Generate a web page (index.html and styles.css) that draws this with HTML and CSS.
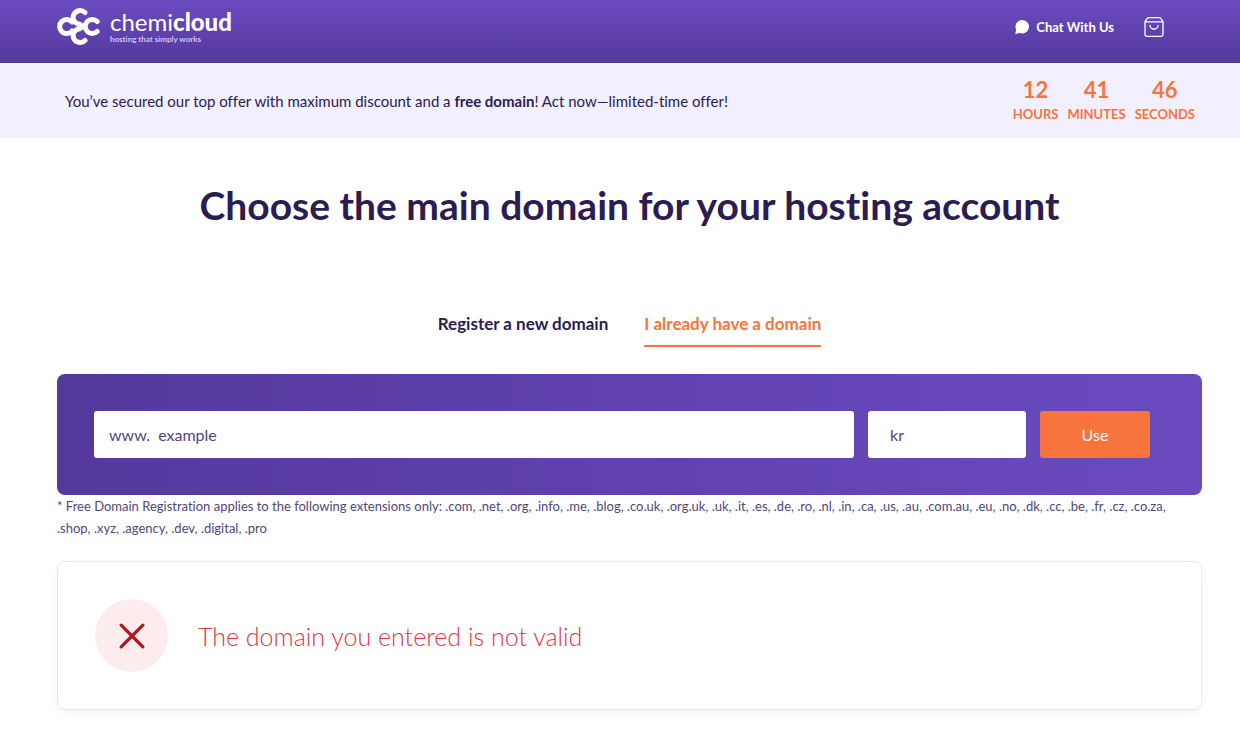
FILE: index.html
```html
<!DOCTYPE html>
<html lang="en">
<head>
<meta charset="utf-8">
<meta name="viewport" content="width=device-width, initial-scale=1">
<title>ChemiCloud – Choose your domain</title>
<link rel="stylesheet" href="styles.css">
</head>
<body>
<header class="topbar">
  <a class="logo" href="#" aria-label="chemicloud">
    <svg class="logo-mark" viewBox="0 0 43 37" aria-hidden="true">
      <g fill="none" stroke="#fff" stroke-width="5" stroke-linecap="round">
        <path d="M15 14A7 7 0 1 0 15 23"/>
        <path d="M28 4.500A7 6.800 0 1 0 23 16.200"/>
        <path d="M28 32.500A7 6.800 0 1 1 23 20.800"/>
        <path d="M40.200 13.500A7 7 0 1 0 40.200 23.500"/>
        <path d="M23 17.500 28 18.500 23 19.500"/>
      </g>
    </svg>
    <span class="logo-text">
      <span class="logo-name">chemi<b>cloud</b></span>
      <span class="logo-tag">hosting that simply works</span>
    </span>
  </a>
  <nav class="top-links">
    <a class="chat" href="#">
      <svg class="chat-icon" viewBox="0 0 14 14" aria-hidden="true"><path fill="#fff" d="M7.300 0a6.700 6.700 0 1 1-3 12.700Q2.500 14 .4 13.900 0 13.700.3 13.200 1.300 11.500.9 9A6.700 6.700 0 0 1 7.300 0Z"/></svg>
      Chat With Us
    </a>
    <a class="cart" href="#" aria-label="Cart">
      <svg class="cart-icon" viewBox="0 0 20 20" fill="none" stroke="#fff" stroke-width="1.300" stroke-linecap="round" stroke-linejoin="round" aria-hidden="true"><path d="M1 4.500 3.500 1.200Q4 .7 5 .7H15Q16 .7 16.500 1.200L19 4.500V17.500a1.800 1.800 0 0 1-1.800 1.800H2.800A1.800 1.800 0 0 1 1 17.500ZM1 4.800H19M6 8.500a4 3.500 0 0 0 8 0"/></svg>
    </a>
  </nav>
</header>
<section class="offer">
  <p class="offer-text">You’ve secured our top offer with maximum discount and a <b>free domain</b>! Act now—limited-time offer!</p>
  <div class="timer">
    <div class="unit"><span class="num">12</span><span class="label">HOURS</span></div>
    <div class="unit"><span class="num">41</span><span class="label">MINUTES</span></div>
    <div class="unit"><span class="num">46</span><span class="label">SECONDS</span></div>
  </div>
</section>
<main class="main">
  <h1 class="title">Choose the main domain for your hosting account</h1>
  <div class="tabs" role="tablist">
    <button class="tab" type="button" role="tab" aria-selected="false">Register a new domain</button>
    <button class="tab active" type="button" role="tab" aria-selected="true">I already have a domain</button>
  </div>
  <form class="search">
    <div class="field domain">
      <label for="domain">www.</label>
      <input id="domain" type="text" value="example">
    </div>
    <input class="field tld" type="text" value="kr" aria-label="Extension">
    <button class="use" type="button">Use</button>
  </form>
  <p class="note">* Free Domain Registration applies to the following extensions only: .com, .net, .org, .info, .me, .blog, .co.uk, .org.uk, .uk, .it, .es, .de, .ro, .nl, .in, .ca, .us, .au, .com.au, .eu, .no, .dk, .cc, .be, .fr, .cz, .co.za, .shop, .xyz, .agency, .dev, .digital, .pro</p>
  <div class="result" role="alert">
    <span class="badge"><svg class="cross" viewBox="0 0 24 24" aria-hidden="true"><path d="M2 2 22 22M22 2 2 22" stroke="#b3161c" stroke-width="3" stroke-linecap="round"/></svg></span>
    <p class="message">The domain you entered is not valid</p>
  </div>
</main>
</body>
</html>
```
FILE: styles.css
```css
* { box-sizing: border-box; }

body {
  margin: 0;
  background: #fff;
  color: #2b1d52;
  font-family: Lato, "Open Sans", sans-serif;
  font-variant-ligatures: none;
}

p, h1 { margin: 0; }
button, input { font: inherit; border: 0; padding: 0; }

.topbar {
  display: flex;
  justify-content: space-between;
  align-items: center;
  height: 63px;
  padding: 0 76px 10px 57px;
  background: linear-gradient(#6a4bc0, #54399c);
}

.logo, .chat { display: flex; align-items: center; color: #fff; text-decoration: none; }
.logo { gap: 10px; }
.logo-mark { width: 43px; height: 37px; }
.logo-text { display: flex; flex-direction: column; }
.logo-name { font-size: 24px; font-weight: 400; line-height: 24px; }
.logo-name b { font-weight: 900; }
.logo-tag { font-size: 8px; font-weight: 700; line-height: 10px; color: #cfc4ec; }

.top-links { display: flex; align-items: center; gap: 30px; }
.chat { gap: 7px; font-size: 13px; font-weight: 700; }
.chat-icon { width: 14px; height: 14px; }
.cart-icon { display: block; width: 20px; height: 20px; }

.offer {
  display: flex;
  justify-content: space-between;
  align-items: center;
  height: 75px;
  padding: 0 45px 0 65px;
  background: #f2effe;
}

.offer-text { font-size: 15px; }
.timer { display: flex; gap: 9px; color: #f8743d; font-weight: 700; }
.unit { display: flex; flex-direction: column; align-items: center; }
.num { font-size: 22px; line-height: 26px; }
.label { font-size: 13px; line-height: 22px; }

.main { padding: 0 38px 32px 57px; }

.title {
  padding-top: 43px;
  font-size: 39px;
  line-height: 48px;
  text-align: center;
}

.tabs { display: flex; justify-content: center; gap: 36px; padding-top: 73px; }
.tab {
  padding: 10px 0 9px;
  border-bottom: 2px solid transparent;
  background: none;
  color: #2b1d52;
  font-size: 17px;
  font-weight: 700;
  line-height: 24px;
}
.tab.active { border-color: #f8743d; color: #f8743d; }

.search {
  display: flex;
  gap: 14px;
  margin-top: 27px;
  padding: 37px 52px 37px 37px;
  border-radius: 8px;
  background: linear-gradient(90deg, #54399c, #6a4bc0);
}

.field {
  height: 47px;
  border-radius: 3px;
  background: #fff;
  color: #51477a;
  font-size: 16px;
}
.domain { display: flex; flex: 1; align-items: center; gap: 8px; padding: 0 15px; }
.domain input { flex: 1; min-width: 0; color: inherit; background: none; }
.tld { width: 158px; padding: 0 22px; }
.use { width: 110px; border-radius: 3px; background: #f8743d; color: #fff; font-size: 16px; }

.note { color: #51477a; font-size: 13px; line-height: 22px; }

.result {
  display: flex;
  align-items: center;
  gap: 30px;
  margin-top: 22px;
  padding: 37px;
  border: 1px solid #e8e8ea;
  border-radius: 8px;
  box-shadow: 0 4px 12px rgba(0, 0, 0, 0.04);
}
.badge {
  display: grid;
  place-items: center;
  width: 73px;
  height: 73px;
  border-radius: 50%;
  background: #fcecee;
}
.cross { width: 26px; height: 26px; }
.message { color: #d93a3f; font-size: 25px; font-weight: 300; }
```
